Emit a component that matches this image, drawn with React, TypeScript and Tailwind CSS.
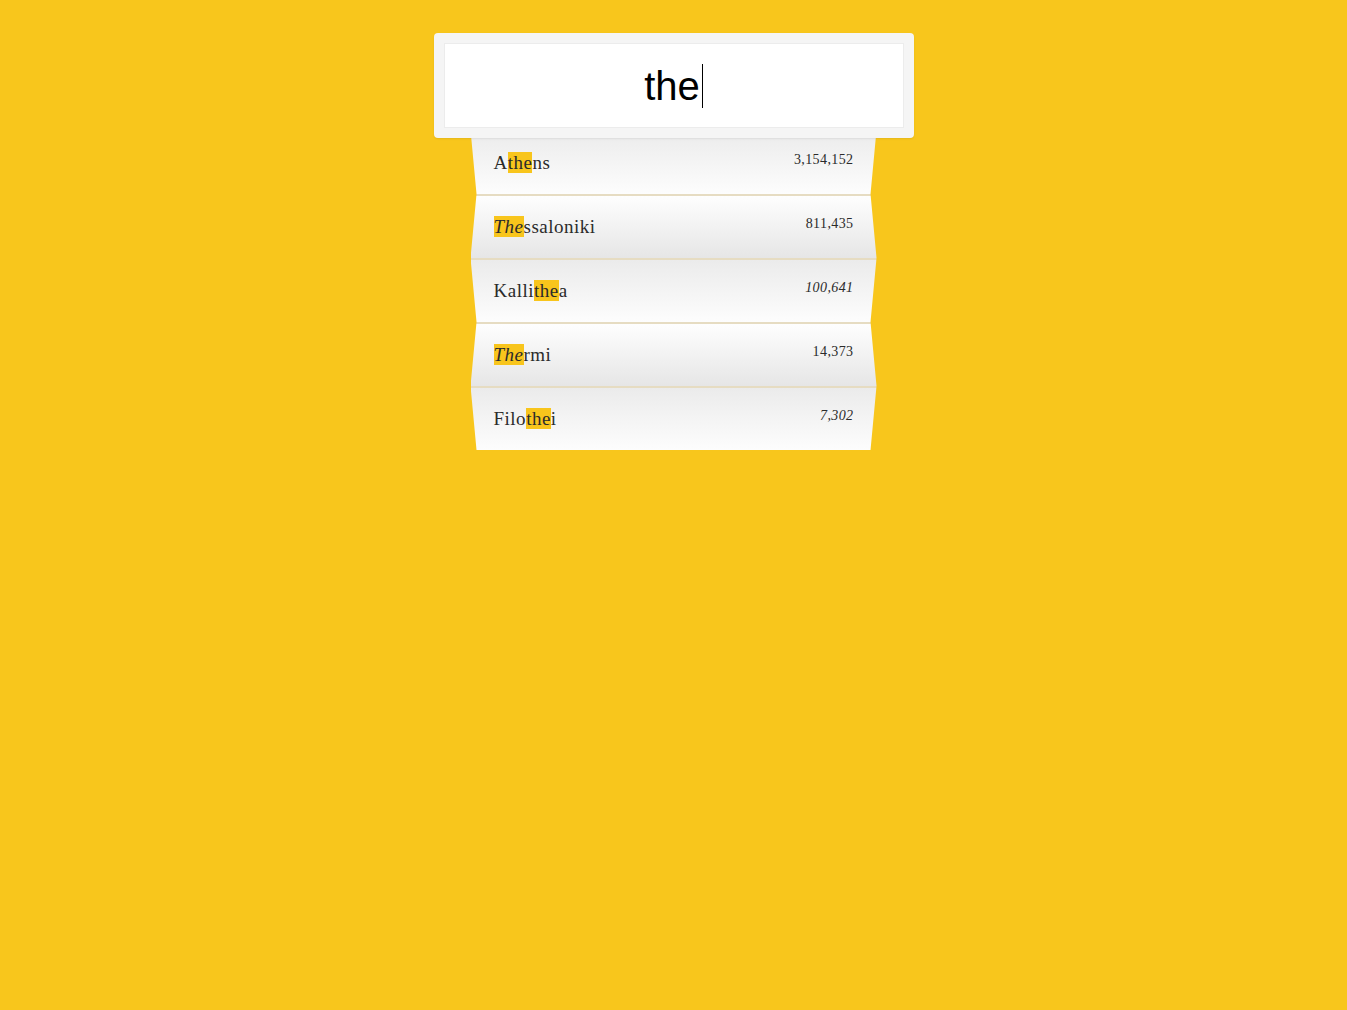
const cities = [
	{ before: "A", match: "the", after: "ns", pop: "3,154,152", italic: false },
	{ before: "", match: "The", after: "ssaloniki", pop: "811,435", italic: true },
	{ before: "Kalli", match: "the", after: "a", pop: "100,641", italic: false },
	{ before: "", match: "The", after: "rmi", pop: "14,373", italic: true },
	{ before: "Filo", match: "the", after: "i", pop: "7,302", italic: false },
];

const ResultRow = ({ city, index }: { city: (typeof cities)[number]; index: number }) => {
	// even rows are wide on top, odd rows are wide at the bottom (folded paper look)
	const wideTop = index % 2 === 0;
	const top = index === 0 ? "mt-[22px]" : "mt-[20px]";
	return (
		<div
			className={`relative flex h-16 items-start justify-between pl-[23px] pr-[23px] ${
				wideTop
					? "[clip-path:polygon(0_0,100%_0,calc(100%-6px)_100%,6px_100%)] bg-gradient-to-b from-[#ebebeb] to-[#fdfdfd]"
					: "[clip-path:polygon(6px_0,calc(100%-6px)_0,100%_100%,0_100%)] bg-gradient-to-b from-[#fefefe] to-[#e6e6e6]"
			} ${index > 0 ? "border-t-2 border-[#e6dcc2]" : ""}`}
		>
			<span className={`${top} text-[19px] leading-[22px] tracking-[0.5px] text-[#2b2b2b]`}>
				{city.before}
				<span className={`bg-[#f8c51c] ${city.italic ? "italic" : ""}`}>{city.match}</span>
				{city.after}
			</span>
			<span
				className={`${top} text-[14px] leading-[16px] tracking-[0.4px] text-[#2b2b2b] ${
					index === 2 || index === 4 ? "italic" : ""
				}`}
			>
				{city.pop}
			</span>
		</div>
	);
};

export default function App() {
	return (
		<div className="min-h-screen bg-[#f8c61c] pt-[33px] font-['Liberation_Serif',serif]">
			<div className="mx-auto flex w-[480px] flex-col items-center">
				{/* search box */}
				<div className="relative z-10 w-full rounded-[4px] bg-[#f5f5f5] p-[10px] shadow-[0_1px_2px_rgba(0,0,0,0.08)]">
					<div className="flex h-[85px] items-center justify-center border border-[#ececec] bg-white">
						<span className="font-['Liberation_Sans',Arial,sans-serif] text-[40px] leading-none text-black">
							the
						</span>
						<span className="ml-[2px] h-[44px] w-px bg-black" />
					</div>
				</div>

				{/* results */}
				<div className="-mt-2 flex w-[406px] flex-col">
					{cities.map((city, i) => (
						<ResultRow key={city.after + i} city={city} index={i} />
					))}
				</div>
			</div>
		</div>
	);
}
